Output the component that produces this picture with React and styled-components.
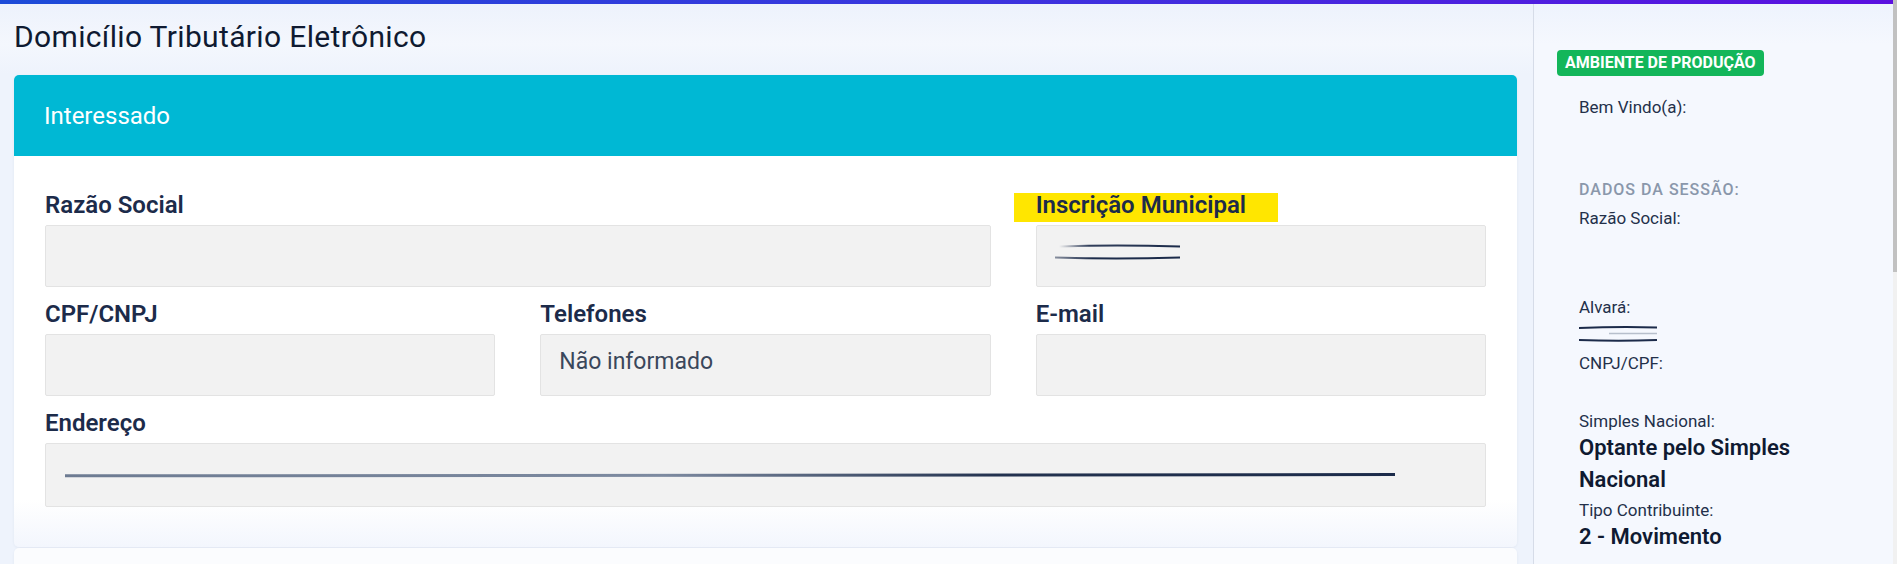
import React from "react";
import styled, { createGlobalStyle } from "styled-components";

const Global = createGlobalStyle`
  html, body {
    margin: 0;
    padding: 0;
    overflow: hidden;
  }
  body {
    font-family: Roboto, "Noto Sans", "Liberation Sans", sans-serif;
    color: #1c2b4a;
  }
  * {
    box-sizing: border-box;
  }
`;

const Viewport = styled.div`
  display: flex;
  height: 100vh;
  overflow: hidden;
  background: #f1f5fd;
`;

const Page = styled.div`
  flex: 1;
  min-width: 0;
`;

const ScrollTrack = styled.div`
  width: 4px;
  flex-shrink: 0;
  background: #f1f1f1;
`;

const ScrollThumb = styled.div`
  height: 272px;
  background: #c1c1c1;
`;

const TopBar = styled.div`
  height: 4px;
  background: linear-gradient(90deg, #1c4bd8 0%, #3a35de 50%, #5b10e0 100%);
`;

const Layout = styled.div`
  display: flex;
  align-items: stretch;
`;

const Main = styled.main`
  flex: 1;
  min-width: 0;
  padding: 0 16px 20px 14px;
  background: linear-gradient(180deg, #edf2fc 0px, #f4f7fd 40px, #eef3fc 70px, #eef3fc 100%);
`;

const Title = styled.h1`
  margin: 15px 0 20px;
  font-size: 30px;
  line-height: 36px;
  font-weight: 400;
  letter-spacing: 0.35px;
  color: #0f1a31;
`;

const Card = styled.section`
  border-radius: 5px;
  overflow: hidden;
  background: ${p => (p.$muted ? "#fbfcfe" : "linear-gradient(180deg, #ffffff 0%, #ffffff 90%, #f3f6fd 100%)")};
  box-shadow: 0 1px 3px rgba(30, 50, 90, 0.06);
  min-height: ${p => p.$minHeight || 0}px;
  margin-bottom: 1px;
`;

const CardHeader = styled.header`
  height: 81px;
  display: flex;
  align-items: center;
  padding: 0 30px;
  background: #00b8d4;
  color: #ffffff;
  font-size: 24px;
  font-weight: 400;
`;

const CardBody = styled.div`
  display: grid;
  grid-template-columns: repeat(3, 1fr);
  column-gap: 45px;
  row-gap: 12px;
  padding: 34px 31px 40px;
`;

const Field = styled.div`
  grid-column: span ${p => p.$span || 1};
  display: flex;
  flex-direction: column;
  align-items: flex-start;
`;

const Label = styled.label`
  position: relative;
  z-index: 0;
  font-size: 24px;
  line-height: 30px;
  font-weight: 600;
  color: #1c2b4a;
  margin-bottom: 5px;

  ${p =>
    p.$highlight &&
    `
    &::before {
      content: "";
      position: absolute;
      z-index: -1;
      top: 3px;
      bottom: -2px;
      left: -22px;
      right: -32px;
      background: #ffe600;
    }
  `}
`;

const Input = styled.div`
  align-self: stretch;
  height: ${p => p.$height || 62}px;
  display: flex;
  align-items: center;
  padding: 0 18px ${p => (p.$centered ? 0 : 8)}px;
  background: #f2f2f2;
  border: 1px solid #e3e3e3;
  border-radius: 2px;
  font-size: 23px;
  font-weight: 400;
  color: #3a475b;
`;

const Sidebar = styled.aside`
  width: 360px;
  flex-shrink: 0;
  border-left: 1px solid #d6dce8;
  padding: 46px 24px 20px 23px;
  background: linear-gradient(180deg, #eef3fd 0px, #f5f8fe 40px, #f5f8fe 100%);
`;

const Badge = styled.span`
  display: inline-block;
  height: 26px;
  line-height: 26px;
  padding: 0 8px;
  border-radius: 4px;
  background: #13b65a;
  color: #ffffff;
  font-size: 16px;
  font-weight: 700;
  margin-bottom: 20px;
`;

const SideList = styled.div`
  display: flex;
  flex-direction: column;
  padding-left: 22px;
`;

const SideLabel = styled.div`
  font-size: 17px;
  line-height: 22px;
  font-weight: 400;
  color: #23304a;
`;

const SideHeading = styled.div`
  font-size: 16px;
  line-height: 22px;
  font-weight: 500;
  letter-spacing: 1px;
  color: #8a97ab;
  margin-bottom: 6px;
`;

const SideValue = styled.div`
  min-height: ${p => p.$minHeight || 0}px;
  margin: 0 0 3px;
  font-size: 22px;
  line-height: 32px;
  font-weight: 600;
  color: #0f1a31;
`;

const RedactInscricao = () => (
  <svg width="126" height="16" viewBox="0 0 126 16">
    <defs>
      <linearGradient id="ri1" x1="0" x2="1">
        <stop offset="0" stopColor="#1c2b4a" stopOpacity="0" />
        <stop offset="0.25" stopColor="#1c2b4a" stopOpacity="0.9" />
        <stop offset="1" stopColor="#1c2b4a" />
      </linearGradient>
      <linearGradient id="ri2" x1="0" x2="1">
        <stop offset="0" stopColor="#1c2b4a" stopOpacity="0.5" />
        <stop offset="0.3" stopColor="#1c2b4a" />
        <stop offset="1" stopColor="#1c2b4a" />
      </linearGradient>
    </defs>
    <path d="M4 2.5 Q60 0.5 125 2.5" stroke="url(#ri1)" strokeWidth="2" fill="none" />
    <path d="M30 8.5 L125 8.5" stroke="url(#ri1)" strokeWidth="2" fill="none" />
    <path d="M0 13.5 Q60 15.5 125 13.5" stroke="url(#ri2)" strokeWidth="2" fill="none" />
  </svg>
);

const RedactEndereco = () => (
  <svg width="1330" height="6" viewBox="0 0 1330 6" style={{ marginLeft: 1 }}>
    <defs>
      <linearGradient id="re" x1="0" x2="1">
        <stop offset="0" stopColor="#6d7b92" />
        <stop offset="0.45" stopColor="#7d8aa0" />
        <stop offset="0.7" stopColor="#23324f" />
        <stop offset="1" stopColor="#1c2b4a" />
      </linearGradient>
    </defs>
    <path d="M0 3.8 L1330 2.6" stroke="url(#re)" strokeWidth="3" fill="none" />
  </svg>
);

const RedactAlvara = () => (
  <svg width="78" height="16" viewBox="0 0 78 16" style={{ marginTop: 8, display: "block" }}>
    <path d="M0 2 Q40 0.5 78 1.5" stroke="#1c2b4a" strokeWidth="2" fill="none" />
    <path d="M30 7.5 L78 7.5" stroke="#b7bfcc" strokeWidth="1.5" fill="none" />
    <path d="M0 14 Q40 15.5 78 14" stroke="#1c2b4a" strokeWidth="2" fill="none" />
  </svg>
);

export default function App() {
  return (
    <>
      <Global />
      <Viewport>
        <Page>
          <TopBar />
          <Layout>
            <Main>
              <Title>Domicílio Tributário Eletrônico</Title>
              <Card>
                <CardHeader>Interessado</CardHeader>
                <CardBody>
                  <Field $span={2}>
                    <Label>Razão Social</Label>
                    <Input />
                  </Field>
                  <Field>
                    <Label $highlight>Inscrição Municipal</Label>
                    <Input>
                      <RedactInscricao />
                    </Input>
                  </Field>
                  <Field>
                    <Label>CPF/CNPJ</Label>
                    <Input />
                  </Field>
                  <Field>
                    <Label>Telefones</Label>
                    <Input>Não informado</Input>
                  </Field>
                  <Field>
                    <Label>E-mail</Label>
                    <Input />
                  </Field>
                  <Field $span={3}>
                    <Label>Endereço</Label>
                    <Input $height={64} $centered>
                      <RedactEndereco />
                    </Input>
                  </Field>
                </CardBody>
              </Card>
              <Card $muted $minHeight={600} />
            </Main>
            <Sidebar>
              <Badge>AMBIENTE DE PRODUÇÃO</Badge>
              <SideList>
                <SideLabel>Bem Vindo(a):</SideLabel>
                <SideValue $minHeight={58} />
                <SideHeading>DADOS DA SESSÃO:</SideHeading>
                <SideLabel>Razão Social:</SideLabel>
                <SideValue $minHeight={64} />
                <SideLabel>Alvará:</SideLabel>
                <SideValue $minHeight={31}>
                  <RedactAlvara />
                </SideValue>
                <SideLabel>CNPJ/CPF:</SideLabel>
                <SideValue $minHeight={33} />
                <SideLabel>Simples Nacional:</SideLabel>
                <SideValue>Optante pelo Simples Nacional</SideValue>
                <SideLabel>Tipo Contribuinte:</SideLabel>
                <SideValue>2 - Movimento</SideValue>
              </SideList>
            </Sidebar>
          </Layout>
        </Page>
        <ScrollTrack>
          <ScrollThumb />
        </ScrollTrack>
      </Viewport>
    </>
  );
}
